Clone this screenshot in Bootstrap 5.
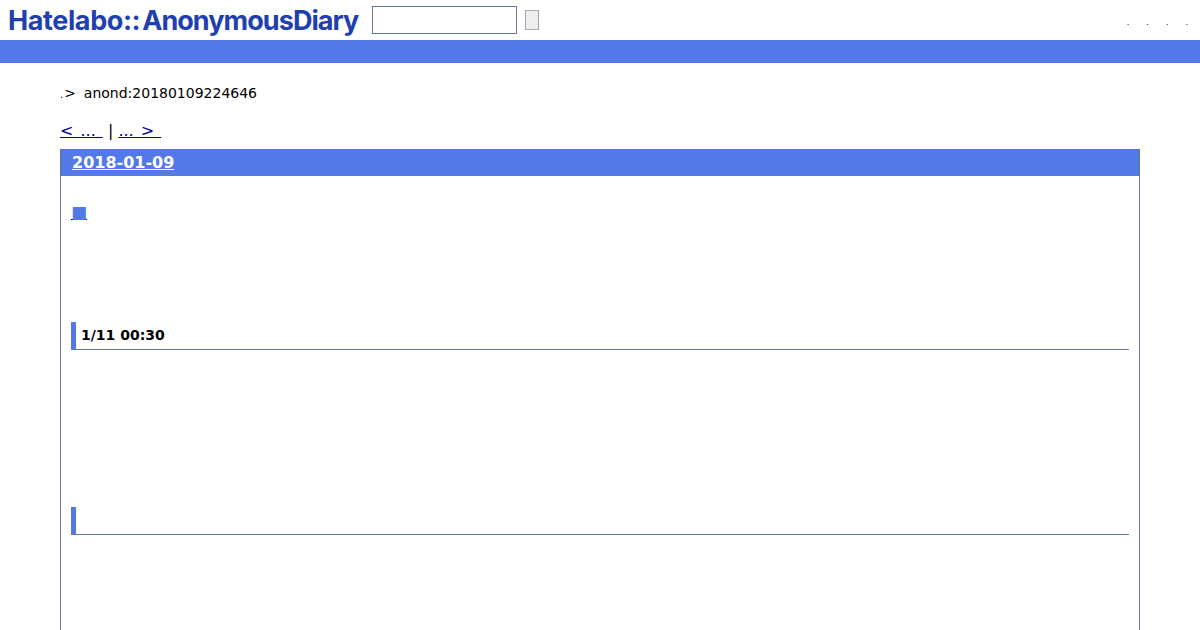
<!DOCTYPE html>
<html lang="ja">
<head>
    <meta charset="UTF-8">
    <meta name="viewport" content="width=device-width, initial-scale=1.0">
    <title>anond:20180109224646</title>
    <link rel="stylesheet" href="https://cdn.jsdelivr.net/npm/bootstrap@5.3.1/dist/css/bootstrap.min.css">
    <script src="https://cdn.jsdelivr.net/npm/bootstrap@5.3.1/dist/js/bootstrap.bundle.min.js"></script>
    <style>
        html, body {
            height: 630px;
            overflow: hidden;
        }
        body {
            background: #fff;
            color: #000;
            font-family: "DejaVu Sans", sans-serif;
            font-size: 14px;
        }
        a {
            color: #00008b;
        }
        .top-head {
            height: 40px;
            padding-left: 8px;
        }
        .site-logo {
            width: 350px;
            color: #1e40b0;
            font-family: Inter, sans-serif;
            font-size: 27px;
            font-weight: 700;
            letter-spacing: -0.4px;
            line-height: 39px;
            white-space: nowrap;
        }
        .logo-second {
            margin-left: 2px;
            letter-spacing: -0.95px;
        }
        .search-box {
            width: 145px;
            height: 28px;
            margin-left: 14px;
            border: 1px solid #64789a;
            background: #fff;
        }
        .search-btn {
            width: 14px;
            height: 20px;
            margin-left: 8px;
            padding: 0;
            border: 1px solid #aaa;
            background: #eee;
        }
        .top-dots {
            gap: 17px;
            padding: 6px 12px 0 0;
            font-size: 8px;
            line-height: 1;
            color: #000;
        }
        .blue-bar {
            height: 23px;
            background: #5279e7;
        }
        .page-body {
            padding: 20px 60px 0;
        }
        .crumb {
            height: 20px;
            line-height: 20px;
            margin-bottom: 17px;
            word-spacing: -0.5px;
        }
        .crumb-dot {
            margin-right: 1px;
            font-size: 10px;
        }
        .pager {
            height: 22px;
            line-height: 22px;
            font-size: 16px;
            margin-bottom: 7px;
        }
        .pager a {
            word-spacing: 2px;
        }
        .day-box {
            height: 481px;
            border-left: 1px solid #64789a;
            border-right: 1px solid #64789a;
        }
        .day-title {
            height: 27px;
            padding-left: 11px;
            background: #5279e7;
            font-size: 16px;
            font-weight: 700;
            line-height: 27px;
        }
        .day-title a {
            color: #fff;
        }
        .day-text {
            padding: 0 10px;
        }
        .square-link {
            display: block;
            width: 15px;
            height: 18px;
            margin-top: 27px;
            color: #5279e7;
            font-size: 17px;
            line-height: 18px;
            text-decoration-color: #00008b;
        }
        .entry-head {
            height: 28px;
            padding-left: 5px;
            border-left: 5px solid #5279e7;
            border-bottom: 1px solid #64789a;
            font-size: 14px;
            font-weight: 700;
            line-height: 27px;
        }
        .first-head {
            margin-top: 101px;
        }
        .second-head {
            margin-top: 157px;
        }
    </style>
</head>
<body>

<div class="top-head d-flex align-items-center">
    <div class="site-logo">Hatelabo::<span class="logo-second">AnonymousDiary</span></div>
    <input class="search-box" type="text" aria-label="search">
    <button class="search-btn" type="button" aria-label="submit"></button>
    <div class="top-dots d-flex ms-auto">
        <span>.</span><span>.</span><span>.</span><span>.</span>
    </div>
</div>
<div class="blue-bar"></div>

<div class="page-body">
    <div class="crumb"><span class="crumb-dot">.</span>&gt;&nbsp; anond:20180109224646</div>
    <div class="pager"><a href="#">&lt; ...&nbsp;</a> | <a href="#">... &gt;&nbsp;</a></div>
    <div class="day-box">
        <div class="day-title"><a href="#">2018-01-09</a></div>
        <div class="day-text">
            <a class="square-link" href="#">■</a>
            <div class="entry-head first-head">1/11 00:30</div>
            <div class="entry-head second-head"></div>
        </div>
    </div>
</div>

</body>
</html>
